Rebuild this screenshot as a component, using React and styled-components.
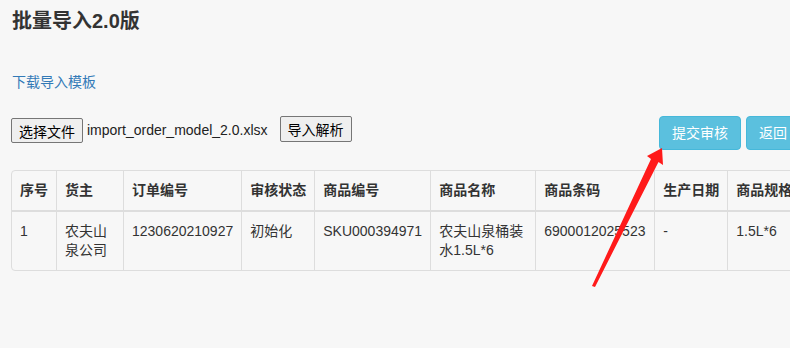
import React from "react";
import styled, { createGlobalStyle } from "styled-components";

const GlobalStyle = createGlobalStyle`
  html {
    overflow: hidden;
  }
  html, body {
    margin: 0;
    padding: 0;
    background: #f7f7f7;
  }
  body {
    font-family: "Liberation Sans", "Noto Sans CJK SC", Arial, sans-serif;
    font-size: 14px;
    color: #333;
  }
`;

const Page = styled.div`
  position: relative;
  box-sizing: border-box;
  width: 800px;
  min-height: 348px;
  padding: 10px 0 0 11px;
`;

const Title = styled.h3`
  margin: 0 0 0 1px;
  font-size: 20px;
  line-height: 22px;
  font-weight: bold;
  color: #333;
`;

const TemplateLink = styled.a`
  display: inline-block;
  margin: 40px 0 0 1px;
  line-height: 20px;
  color: #337ab7;
  text-decoration: none;
  cursor: pointer;
`;

const Toolbar = styled.div`
  display: flex;
  align-items: flex-start;
  justify-content: space-between;
  margin-top: 24px;
  height: 34px;
`;

const FileGroup = styled.div`
  display: flex;
  align-items: flex-start;
`;

const NativeButton = styled.button`
  height: ${(p) => p.$h}px;
  margin-top: ${(p) => p.$top}px;
  padding: 0 7px;
  font-family: inherit;
  font-size: 14px;
  color: #000;
  background: #efefef;
  border: 1px solid #767676;
  border-radius: 2px;
`;

const FileName = styled.span`
  margin: 2px 12px 0 4px;
  line-height: 24px;
  color: #222;
`;

const ActionGroup = styled.div`
  display: flex;
  gap: 5px;
`;

const InfoButton = styled.button`
  height: 34px;
  padding: 6px 12px;
  font-family: inherit;
  font-size: 14px;
  line-height: 20px;
  color: #fff;
  background: #5bc0de;
  border: 1px solid #46b8da;
  border-radius: 4px;
`;

const TablePanel = styled.div`
  margin-top: 20px;
  width: max-content;
  border: 1px solid #ddd;
  border-radius: 4px;
  overflow: hidden;
`;

const Table = styled.table`
  border-collapse: collapse;
  table-layout: fixed;
`;

const Th = styled.th`
  width: ${(p) => p.$w}px;
  padding: 10px 8px;
  line-height: 19px;
  text-align: left;
  font-weight: bold;
  border-left: 1px solid #ddd;
  border-bottom: 2px solid #ddd;
  &:first-child {
    border-left: none;
  }
`;

const Td = styled.td`
  padding: 10px 8px;
  line-height: 19px;
  vertical-align: top;
  border-left: 1px solid #ddd;
  &:first-child {
    border-left: none;
  }
`;

const Arrow = styled.svg`
  position: absolute;
  left: 0;
  top: 0;
  width: 790px;
  height: 348px;
  pointer-events: none;
`;

const columns = [
  ["序号", 28],
  ["货主", 50],
  ["订单编号", 101],
  ["审核状态", 56],
  ["商品编号", 99],
  ["商品名称", 88],
  ["商品条码", 102],
  ["生产日期", 56],
  ["商品规格", 80],
  ["数量", 60],
];

const row = [
  "1",
  "农夫山泉公司",
  "1230620210927",
  "初始化",
  "SKU000394971",
  "农夫山泉桶装水1.5L*6",
  "6900012025523",
  "-",
  "1.5L*6",
  "10",
];

export default function App() {
  return (
    <>
      <GlobalStyle />
      <Page>
        <Title>批量导入2.0版</Title>
        <TemplateLink>下载导入模板</TemplateLink>
        <Toolbar>
          <FileGroup>
            <NativeButton $h={25} $top={2}>选择文件</NativeButton>
            <FileName>import_order_model_2.0.xlsx</FileName>
            <NativeButton $h={26} $top={0}>导入解析</NativeButton>
          </FileGroup>
          <ActionGroup>
            <InfoButton>提交审核</InfoButton>
            <InfoButton>返回</InfoButton>
          </ActionGroup>
        </Toolbar>
        <TablePanel>
          <Table>
            <thead>
              <tr>
                {columns.map(([name, w]) => (
                  <Th key={name} $w={w}>{name}</Th>
                ))}
              </tr>
            </thead>
            <tbody>
              <tr>
                {row.map((v, i) => (
                  <Td key={i}>{v}</Td>
                ))}
              </tr>
            </tbody>
          </Table>
        </TablePanel>
        <Arrow viewBox="0 0 790 348">
          <polygon
            points="662,148 663,165 658.5,162 595,287 592,286 651,159 647,156"
            fill="#ff1a1a"
          />
        </Arrow>
      </Page>
    </>
  );
}
